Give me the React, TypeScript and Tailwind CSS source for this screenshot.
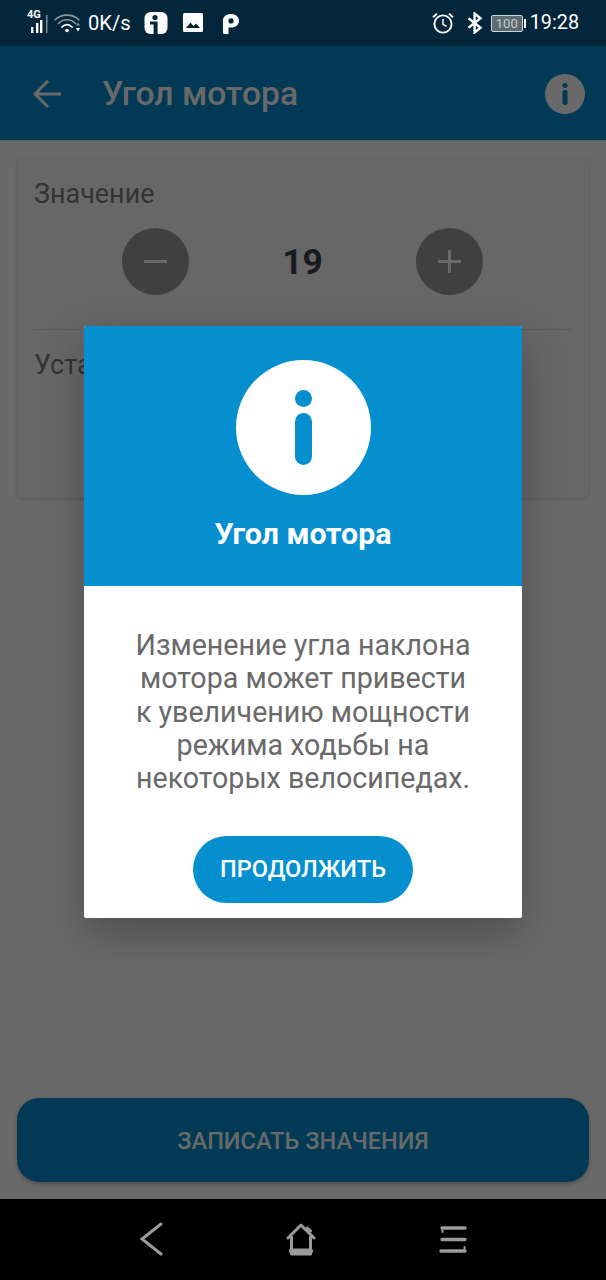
import React from "react";

const font = { fontFamily: "Roboto, 'Noto Sans', sans-serif" };

function InfoGlyph({ size, bg, fg }: { size: number; bg: string; fg: string }) {
  return (
    <svg width={size} height={size} viewBox="0 0 135 135" className="block">
      <circle cx="67.5" cy="67.5" r="67.5" fill={bg} />
      <circle cx="67.5" cy="38.5" r="8.5" fill={fg} />
      <rect x="59" y="53" width="17" height="52" rx="8.5" fill={fg} />
    </svg>
  );
}

function StatusLeft() {
  return (
    <div className="flex items-center">
      <div className="relative w-[22px] h-[24px] ml-[27px] mt-[-1px]">
        <span className="absolute left-0 top-[-2px] text-[11px] font-bold leading-[12px] text-white">4G</span>
        <svg width="22" height="24" viewBox="0 0 22 24" className="absolute left-0 top-0">
          <rect x="4" y="16" width="2.4" height="6" fill="#fff" />
          <rect x="9" y="12" width="2.4" height="10" fill="#fff" />
          <rect x="13" y="9" width="2.4" height="13" fill="#fff" />
          <rect x="19" y="4" width="1.5" height="18" fill="#7f8c94" />
        </svg>
      </div>
      <svg width="28" height="20" viewBox="0 0 28 20" className="ml-[5px]">
        <g fill="none" stroke="#8c979d" strokeWidth="1.6" strokeLinecap="round">
          <path d="M1 7C7 0.5 19 0.5 25 7" />
          <path d="M4.5 10.5C9 5.5 17 5.5 21.5 10.5" />
        </g>
        <path d="M8 14C11 10.8 15 10.8 18 14" fill="none" stroke="#fff" strokeWidth="1.8" strokeLinecap="round" />
        <circle cx="13" cy="17.5" r="1.8" fill="#fff" />
        <path d="M22 12.5h4l-2 -3z" fill="#8c979d" />
        <path d="M22 15h4l-2 3.5z" fill="#fff" />
      </svg>
      <span className="ml-[6px] text-[20.2px] leading-none text-white">0K/s</span>
      <svg width="24" height="22" viewBox="0 0 24 22" className="ml-[13px]">
        <rect x="0.5" y="0" width="23" height="22" rx="6" fill="#fff" />
        <circle cx="11" cy="5.5" r="2.6" fill="#03263a" />
        <path d="M6 9.5h7.6V22H9.6V12.5H6z" fill="#03263a" />
      </svg>
      <svg width="20" height="20" viewBox="0 0 20 20" className="ml-[15px]">
        <rect x="0" y="0" width="20" height="19" rx="1.5" fill="#fff" />
        <path d="M3 15l4.5-5.5 3 3.5 2.5-2.5 4 4.5z" fill="#03263a" />
      </svg>
      <svg width="18" height="21" viewBox="0 0 18 21" className="ml-[19px]">
        <path fillRule="evenodd" d="M1 7.5C1 3.4 4.4 1 9 1s8 2.8 8 6.8-3.4 6.8-8 6.8H6.5V21H2.5a1.5 1.5 0 0 1-1.5-1.5zM9 5.3a2.6 2.6 0 1 0 0 5.2 2.6 2.6 0 0 0 0-5.2z" fill="#fff" />
      </svg>
    </div>
  );
}

function StatusRight() {
  return (
    <div className="flex items-center">
      <svg width="22" height="22" viewBox="0 0 22 22">
        <circle cx="11" cy="12" r="8.6" fill="none" stroke="#fff" strokeWidth="1.9" />
        <path d="M11 7v5.4l3.6 2" fill="none" stroke="#fff" strokeWidth="1.5" />
        <path d="M1 5.2L5 1.6M21 5.2L17 1.6" stroke="#fff" strokeWidth="1.9" />
      </svg>
      <svg width="16" height="22" viewBox="0 0 16 22" className="ml-[13px]">
        <path d="M1.5 6.2L13.5 15.8L7.6 20.5V1.5L13.5 6.2L1.5 15.8" fill="none" stroke="#fff" strokeWidth="2.4" />
      </svg>
      <div className="ml-[8px] flex items-center">
        <div className="w-[32px] h-[17px] rounded-[2px] border border-[#cfd4d7] bg-[#5d6a72] flex items-center justify-center text-[13px] leading-none text-[#c4cacd]">100</div>
        <div className="ml-[1px] w-[2px] h-[9px] bg-white" />
      </div>
      <span className="ml-[4px] text-[19.8px] leading-none text-white">19:28</span>
    </div>
  );
}

export default function App() {
  return (
    <div className="relative w-[606px] h-[1280px] overflow-hidden flex flex-col bg-[#696969]" style={font}>
      <div className="h-[46px] bg-[#03263a] flex items-center justify-between pr-[27px]">
        <StatusLeft />
        <StatusRight />
      </div>
      <div className="h-[95px] bg-[#023a56] flex items-center pl-[33px] pr-[21px] pt-px border-b border-[#4d6472]">
        <svg width="28" height="28" viewBox="0 0 28 28" fill="none" stroke="#696969" strokeWidth="3">
          <path d="M28 14H2M15 1L2 14l13 13" />
        </svg>
        <span className="ml-[41px] text-[33.67px] font-medium text-[#696969] leading-none">Угол мотора</span>
        <div className="ml-auto">
          <InfoGlyph size={40} bg="#696969" fg="#023a56" />
        </div>
      </div>

      <div className="flex-1 flex flex-col px-[17px] pt-[16px] pb-[17px]">
        <div className="h-[341px] rounded-[5px] bg-[#676767] shadow-[0_1px_3px_rgba(0,0,0,0.15)] px-[17px] pt-[22px]">
          <div className="text-[26.94px] leading-[30px] text-[#333333]">Значение</div>
          <div className="mt-[19px] pr-px flex items-center justify-center">
            <div className="w-[67px] h-[67px] rounded-full bg-[#404040] flex items-center justify-center">
              <div className="w-[23px] h-[3px] bg-[#696969]" />
            </div>
            <div className="w-[227px] pt-[2px] text-center text-[35.5px] font-bold leading-none text-[#181c20]">19</div>
            <div className="w-[67px] h-[67px] rounded-full bg-[#404040] flex items-center justify-center text-[#696969]">
              <svg width="25" height="25" viewBox="0 0 25 25"><path d="M12.5 1v23M1 12.5h23" stroke="#696969" strokeWidth="3" /></svg>
            </div>
          </div>
          <div className="mt-[34px] h-px bg-[#5a5a5a]" />
          <div className="mt-[20px] text-[26.94px] leading-[30px] text-[#333333]">Установленное значение</div>
        </div>
        <div className="mt-auto h-[84px] pt-[3px] rounded-[22px] bg-[#023a56] shadow-[0_2px_4px_rgba(0,0,0,0.25)] flex items-center justify-center text-[23.57px] font-medium text-[#696969]">
          ЗАПИСАТЬ ЗНАЧЕНИЯ
        </div>
      </div>

      <div className="h-[81px] bg-black flex items-center justify-center gap-[123px] pb-[1px]">
        <svg width="24" height="34" viewBox="0 0 24 34" fill="none" stroke="#9a9a9a" strokeWidth="3" strokeLinecap="round">
          <path d="M22 2L3 17l19 15" />
        </svg>
        <svg width="30" height="34" viewBox="0 0 30 34" fill="none" stroke="#9a9a9a" strokeWidth="3" strokeLinejoin="round" strokeLinecap="round">
          <path d="M2 16L15 3l13 13M5.5 15v17h19V15" />
          <path d="M5.5 29h19" strokeWidth="5" />
          <path d="M21 6l3.5 3" />
        </svg>
        <svg width="28" height="32" viewBox="0 0 28 32" fill="none" stroke="#9a9a9a" strokeWidth="3.4" strokeLinecap="round">
          <path d="M3 5h23M3 16.5h23M2 28h24" />
          <path d="M3.5 5v4M25.5 28v-4" strokeWidth="2" />
        </svg>
      </div>

      <div className="absolute left-[84px] top-[326px] w-[438px] h-[592px] rounded-[2px] overflow-hidden bg-white shadow-[0_16px_40px_rgba(0,0,0,0.25)] flex flex-col">
        <div className="h-[260px] bg-[#068fcf] flex flex-col items-center pt-[34px]">
          <InfoGlyph size={135} bg="#ffffff" fg="#068fcf" />
          <div className="mt-[22px] text-[30.3px] font-bold leading-[34px] text-white">Угол мотора</div>
        </div>
        <div className="flex-1 flex flex-col items-center pt-[43px]">
          <div className="w-[340px] text-center text-[28.62px] leading-[33.3px] text-[#696969]">
            Изменение угла наклона мотора может привести к увеличению мощности режима ходьбы на некоторых велосипедах.
          </div>
          <div className="mt-[41px] w-[220px] h-[67px] rounded-full bg-[#068fcf] flex items-center justify-center text-[23.57px] font-medium text-white">
            ПРОДОЛЖИТЬ
          </div>
        </div>
      </div>
    </div>
  );
}
